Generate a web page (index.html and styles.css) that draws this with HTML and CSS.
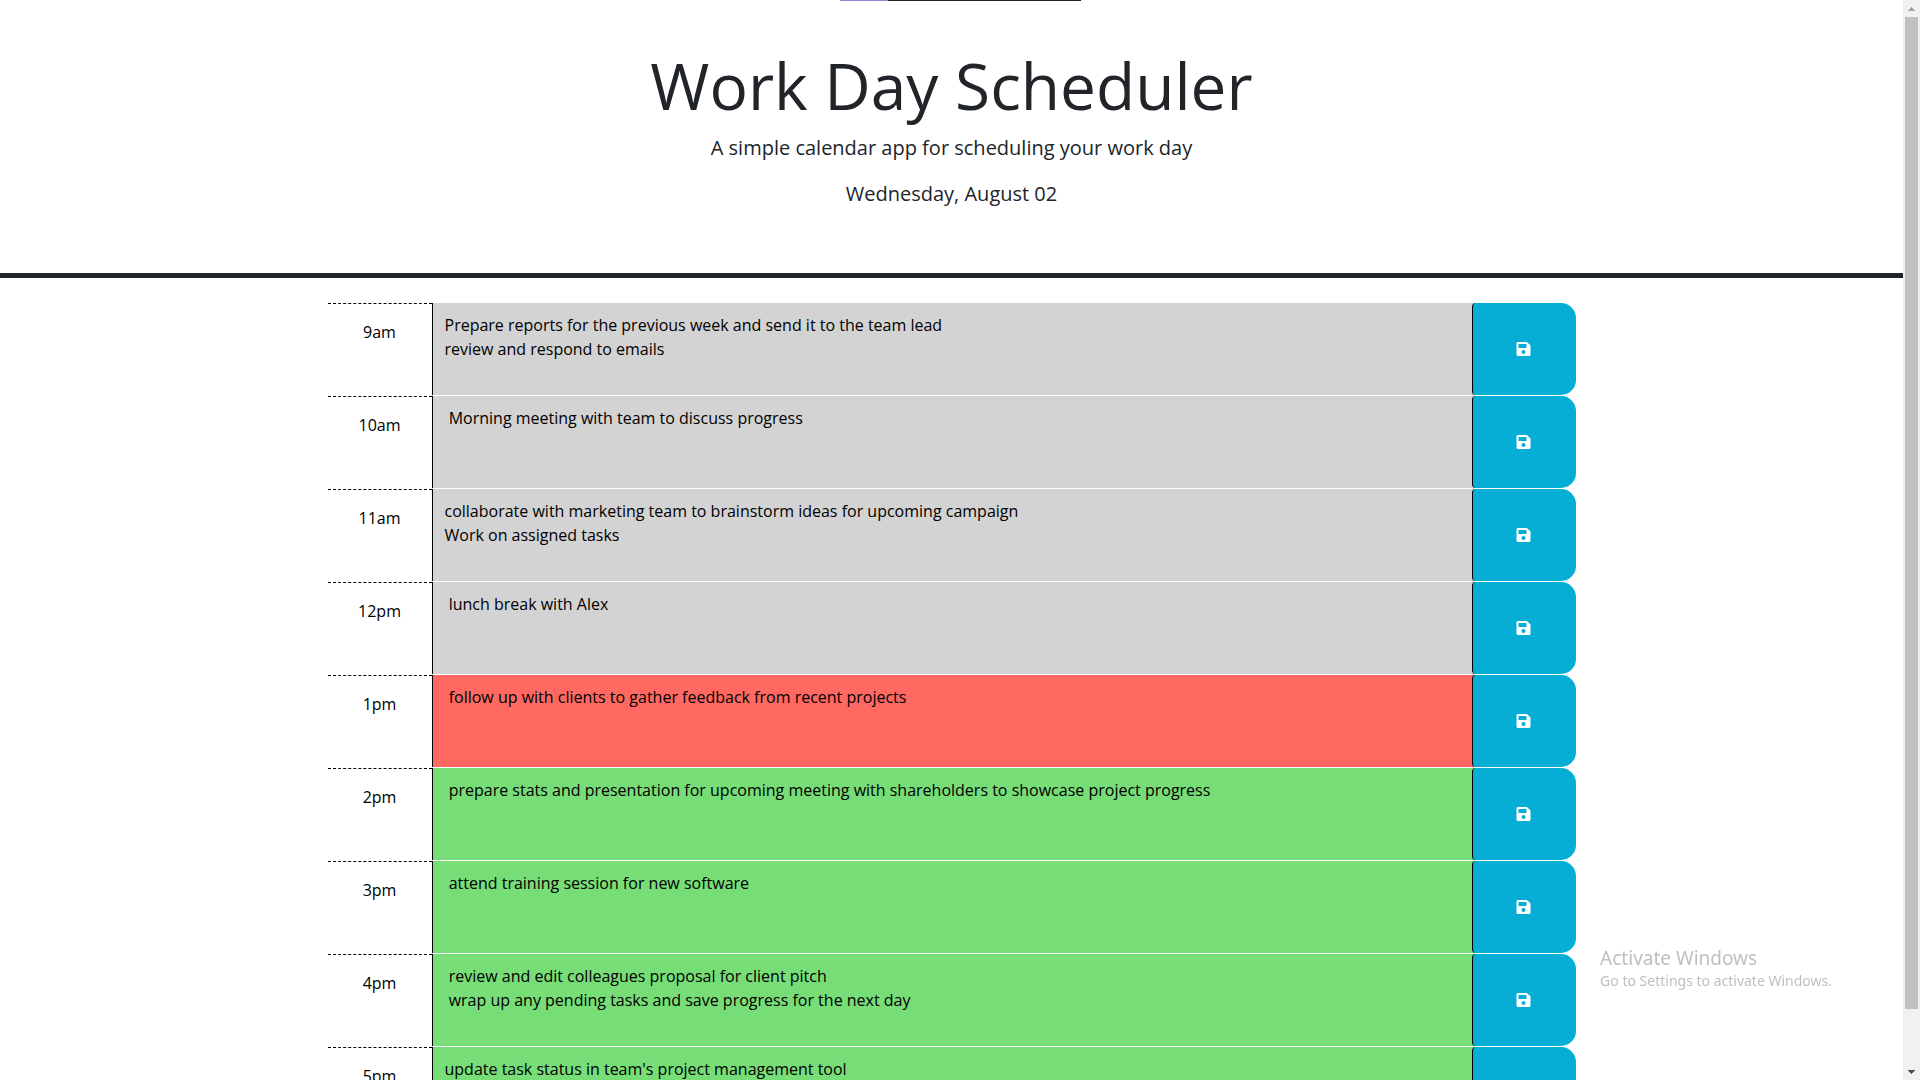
FILE: index.html
```html
<!DOCTYPE html>
<html lang="en">
<head>
<meta charset="UTF-8">
<meta name="viewport" content="width=device-width, initial-scale=1">
<title>Work Day Scheduler</title>
<link rel="stylesheet" href="styles.css">
</head>
<body>
<svg class="sprite" aria-hidden="true">
  <symbol id="save" viewBox="0 0 448 512"><path d="M433.941 129.941l-83.882-83.882A48 48 0 0 0 316.118 32H48C21.49 32 0 53.49 0 80v352c0 26.51 21.49 48 48 48h352c26.51 0 48-21.49 48-48V163.882a48 48 0 0 0-14.059-33.941zM224 416c-35.346 0-64-28.654-64-64 0-35.346 28.654-64 64-64s64 28.654 64 64c0 35.346-28.654 64-64 64zm96-304.52V212c0 6.627-5.373 12-12 12H76c-6.627 0-12-5.373-12-12V108c0-6.627 5.373-12 12-12h228.52c3.183 0 6.235 1.264 8.485 3.515l3.48 3.48A11.996 11.996 0 0 1 320 111.48z"/></symbol>
</svg>
<div class="page">
  <header class="header">
    <h1 class="title">Work Day Scheduler</h1>
    <p class="lead">A simple calendar app for scheduling your work day</p>
    <p class="lead">Wednesday, August 02</p>
  </header>
  <main class="schedule">
    <div class="time-block past">
      <label class="hour" for="hour-9">9am</label>
      <textarea class="description" id="hour-9">Prepare reports for the previous week and send it to the team lead
review and respond to emails</textarea>
      <button class="save" type="button" aria-label="Save 9am"><svg class="icon"><use href="#save"/></svg></button>
    </div>
    <div class="time-block past">
      <label class="hour" for="hour-10">10am</label>
      <textarea class="description" id="hour-10"> Morning meeting with team to discuss progress</textarea>
      <button class="save" type="button" aria-label="Save 10am"><svg class="icon"><use href="#save"/></svg></button>
    </div>
    <div class="time-block past">
      <label class="hour" for="hour-11">11am</label>
      <textarea class="description" id="hour-11">collaborate with marketing team to brainstorm ideas for upcoming campaign
Work on assigned tasks</textarea>
      <button class="save" type="button" aria-label="Save 11am"><svg class="icon"><use href="#save"/></svg></button>
    </div>
    <div class="time-block past">
      <label class="hour" for="hour-12">12pm</label>
      <textarea class="description" id="hour-12"> lunch break with Alex</textarea>
      <button class="save" type="button" aria-label="Save 12pm"><svg class="icon"><use href="#save"/></svg></button>
    </div>
    <div class="time-block present">
      <label class="hour" for="hour-13">1pm</label>
      <textarea class="description" id="hour-13"> follow up with clients to gather feedback from recent projects</textarea>
      <button class="save" type="button" aria-label="Save 1pm"><svg class="icon"><use href="#save"/></svg></button>
    </div>
    <div class="time-block future">
      <label class="hour" for="hour-14">2pm</label>
      <textarea class="description" id="hour-14"> prepare stats and presentation for upcoming meeting with shareholders to showcase project progress</textarea>
      <button class="save" type="button" aria-label="Save 2pm"><svg class="icon"><use href="#save"/></svg></button>
    </div>
    <div class="time-block future">
      <label class="hour" for="hour-15">3pm</label>
      <textarea class="description" id="hour-15"> attend training session for new software</textarea>
      <button class="save" type="button" aria-label="Save 3pm"><svg class="icon"><use href="#save"/></svg></button>
    </div>
    <div class="time-block future">
      <label class="hour" for="hour-16">4pm</label>
      <textarea class="description" id="hour-16"> review and edit colleagues proposal for client pitch
 wrap up any pending tasks and save progress for the next day</textarea>
      <button class="save" type="button" aria-label="Save 4pm"><svg class="icon"><use href="#save"/></svg></button>
    </div>
    <div class="time-block future">
      <label class="hour" for="hour-17">5pm</label>
      <textarea class="description" id="hour-17">update task status in team's project management tool</textarea>
      <button class="save" type="button" aria-label="Save 5pm"><svg class="icon"><use href="#save"/></svg></button>
    </div>
  </main>
</div>
<div class="scrollbar" aria-hidden="true">
  <svg class="arrow arrow-up" viewBox="0 0 17 17"><path d="M5 11h7v-1h-1v-1h-1v-1h-1v-1h-1v1h-1v1h-1v1h-1z"/></svg>
  <div class="track"><div class="thumb"></div></div>
  <svg class="arrow arrow-down" viewBox="0 0 17 17"><path d="M5 7h7v1h-1v1h-1v1h-1v1h-1v-1h-1v-1h-1v-1h-1z"/></svg>
</div>
<div class="share-bar"></div>
<div class="watermark">
  <p class="watermark-title">Activate Windows</p>
  <p class="watermark-text">Go to Settings to activate Windows.</p>
</div>
</body>
</html>
```
FILE: styles.css
```css
* {
  box-sizing: border-box;
}

body {
  margin: 0;
  height: 100vh;
  display: flex;
  overflow: hidden;
  background: #fff;
  color: #212529;
  font: 16px/24px "Open Sans", sans-serif;
}

.sprite {
  display: none;
}

.page {
  flex: 1;
  min-width: 0;
  overflow: hidden;
}

/* Header */
.header {
  padding: 48px;
  border-bottom: 5px solid #212529;
  text-align: center;
}

.title {
  margin: 0 0 10px;
  font-size: 64px;
  font-weight: 400;
  line-height: 75px;
}

.lead {
  margin: 0 0 16px;
  font-size: 20px;
  line-height: 30px;
}

/* Schedule */
.schedule {
  max-width: 1248px;
  margin: 25px auto;
}

.time-block {
  display: grid;
  grid-template-columns: 1fr 10fr 1fr;
  padding-bottom: 1px;
}

.hour {
  padding: 16px 0;
  border-top: 1px dashed #000;
  color: #000;
  text-align: center;
}

/* Runs under the rounded left corners of the save button */
.description {
  height: 92px;
  margin-right: -4px;
  padding: 10px 12px;
  border: 0;
  border-left: 1px solid #000;
  outline: 0;
  resize: none;
  overflow: hidden;
  color: #000;
  font: inherit;
}

.past .description {
  background: #d3d3d3;
}

.present .description {
  background: #ff6961;
}

.future .description {
  background: #77dd77;
}

.save {
  position: relative;
  display: grid;
  place-items: center;
  padding: 0 2px 0 0;
  border: 0;
  border-left: 1px solid #000;
  border-radius: 4px 15px 15px 4px;
  background: #06aed5;
  color: #fff;
  cursor: pointer;
}

.icon {
  width: 15px;
  height: 16px;
  fill: currentColor;
}

/* Scrollbar */
.scrollbar {
  width: 17px;
  display: flex;
  flex-direction: column;
  background: #f1f1f1;
}

.arrow {
  width: 17px;
  height: 17px;
}

.arrow-up {
  fill: #a3a3a3;
}

.arrow-down {
  fill: #505050;
}

.track {
  flex: 1;
  display: flex;
  padding: 0 2px 54px;
}

.thumb {
  flex: 1;
  background: #c1c1c1;
}

/* Overlays */
.share-bar {
  position: fixed;
  top: 0;
  left: 50%;
  width: 241px;
  height: 1px;
  margin-left: -120px;
  background: linear-gradient(to right, #8f86d8 20%, #1f1f1f 20%);
}

.watermark {
  position: fixed;
  right: 88px;
  bottom: 89px;
  color: #bfbfbf;
  font-family: "Noto Sans", sans-serif;
  pointer-events: none;
}

.watermark p {
  margin: 0;
}

.watermark-title {
  font-size: 19px;
  line-height: 26px;
}

.watermark-text {
  font-size: 14px;
  line-height: 20px;
}
```
